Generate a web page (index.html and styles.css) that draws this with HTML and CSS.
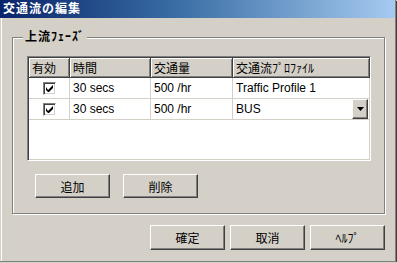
FILE: index.html
```html
<!DOCTYPE html>
<html lang="ja">
<head>
  <meta charset="UTF-8">
  <title>交通流の編集</title>
  <link rel="stylesheet" href="styles.css">
</head>
<body>

  <div class="window">
    <div class="titlebar">交通流の編集</div>

    <div class="client">
      <div class="group">
        <span class="group-label">上流ﾌｪｰｽﾞ</span>

        <div class="list">
          <table>
            <thead>
              <tr>
                <th class="col-on">有効</th>
                <th class="col-time">時間</th>
                <th class="col-vol">交通量</th>
                <th class="col-prof">交通流ﾌﾟﾛﾌｧｲﾙ</th>
              </tr>
            </thead>
            <tbody>
              <tr>
                <td class="center"><span class="check"><svg width="7" height="7" viewBox="0 0 7 7"><path d="M0 2v3l2 2h1l4-4V0L2 5z" fill="#000"/></svg></span></td>
                <td>30 secs</td>
                <td>500 /hr</td>
                <td>Traffic Profile 1</td>
              </tr>
              <tr>
                <td class="center"><span class="check"><svg width="7" height="7" viewBox="0 0 7 7"><path d="M0 2v3l2 2h1l4-4V0L2 5z" fill="#000"/></svg></span></td>
                <td>30 secs</td>
                <td>500 /hr</td>
                <td class="combo">BUS<span class="drop"><svg width="7" height="4" viewBox="0 0 7 4"><path d="M0 0h7L3.5 4z" fill="#000"/></svg></span></td>
              </tr>
            </tbody>
          </table>
        </div>

        <div class="group-buttons">
          <button>追加</button>
          <button>削除</button>
        </div>
      </div>

      <div class="dialog-buttons">
        <button>確定</button>
        <button>取消</button>
        <button>ﾍﾙﾌﾟ</button>
      </div>
    </div>
  </div>

</body>
</html>
```

FILE: styles.css
```css
body {
  margin: 0;
  background-color: #d4d0c8;
  font-family: "Liberation Sans", "Noto Sans CJK JP", sans-serif;
  font-size: 12px;
  color: #000;
}

.window {
  width: 395px;
  height: 261px;
  border-right: 1px solid #808080;
  border-bottom: 1px solid #808080;
  box-shadow: 1px 1px 0 #404040;
  display: flex;
  flex-direction: column;
}

.titlebar {
  height: 18px;
  line-height: 18px;
  padding-left: 3px;
  background: linear-gradient(to right, #0a246a, #3a6ea5 45%, #a6caf0);
  color: #fff;
  font-weight: bold;
  letter-spacing: 1px;
}

.client {
  flex: 1;
  margin-left: 1px;
  border-left: 1px solid #fff;
  display: flex;
  flex-direction: column;
}

.group {
  position: relative;
  margin: 19px 0 0 10px;
  width: 373px;
  height: 177px;
  box-sizing: border-box;
  border: 1px solid #808080;
  box-shadow: inset 1px 1px 0 #fff, 1px 1px 0 #fff;
  padding: 18px 0 0 14px;
}

.group-label {
  position: absolute;
  top: -8px;
  left: 10px;
  padding: 0 2px;
  background-color: #d4d0c8;
  font-weight: bold;
  letter-spacing: 1px;
  line-height: 15px;
}

.list {
  width: 344px;
  height: 105px;
  box-sizing: border-box;
  background-color: #fff;
  border: 1px solid;
  border-color: #808080 #fff #fff #808080;
  box-shadow: inset 1px 1px 0 #404040, inset -1px -1px 0 #d4d0c8;
  padding: 1px;
  overflow: hidden;
}

table {
  border-collapse: collapse;
  table-layout: fixed;
  width: 341px;
}

th {
  height: 19px;
  padding: 0 3px;
  text-align: left;
  font-weight: normal;
  background-color: #d4d0c8;
  border-right: 1px solid #404040;
  border-bottom: 1px solid #404040;
  box-shadow: inset 1px 1px 0 #fff, inset -1px -1px 0 #808080;
  white-space: nowrap;
}

.col-on { width: 34px; }
.col-time { width: 74px; }
.col-vol { width: 75px; }

td {
  height: 20px;
  padding: 0 3px;
  border-right: 1px solid #d4d0c8;
  border-bottom: 1px solid #d4d0c8;
  white-space: nowrap;
}

td.center {
  text-align: center;
  padding: 0;
}

.check {
  display: inline-flex;
  align-items: center;
  justify-content: center;
  width: 9px;
  height: 9px;
  vertical-align: middle;
  background-color: #fff;
  border: 1px solid;
  border-color: #808080 #fff #fff #808080;
  box-shadow: inset 1px 1px 0 #404040, inset -1px -1px 0 #d4d0c8;
  padding: 1px;
}

.combo {
  position: relative;
}

.drop {
  position: absolute;
  top: 0;
  right: 1px;
  width: 14px;
  height: 18px;
  display: flex;
  align-items: center;
  justify-content: center;
  background-color: #d4d0c8;
  border: 1px solid;
  border-color: #fff #404040 #404040 #fff;
  box-shadow: inset -1px -1px 0 #808080;
}

button {
  width: 75px;
  height: 24px;
  padding: 0;
  font-family: inherit;
  font-size: 12px;
  color: #000;
  background-color: #d4d0c8;
  border: 1px solid;
  border-color: #fff #404040 #404040 #fff;
  box-shadow: inset -1px -1px 0 #808080;
}

.group-buttons {
  display: flex;
  gap: 13px;
  margin: 13px 0 0 8px;
}

.dialog-buttons {
  display: flex;
  justify-content: flex-end;
  gap: 5px;
  margin-top: 11px;
  padding-right: 10px;
}

.dialog-buttons button {
  height: 25px;
}
```
